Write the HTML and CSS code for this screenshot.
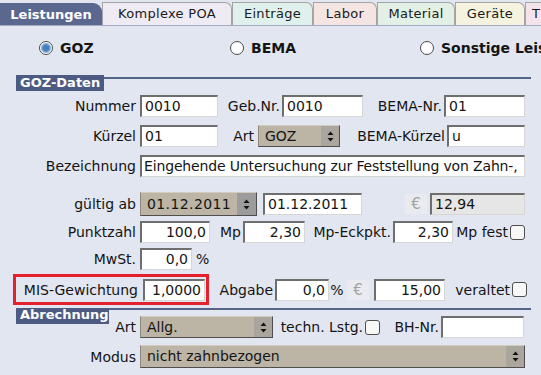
FILE: index.html
```html
<!DOCTYPE html>
<html lang="de">
<head>
<meta charset="utf-8">
<title>Leistungen</title>
<link rel="stylesheet" href="styles.css">
</head>
<body>
<div class="tabs">
  <div class="tab active w-leist">Leistungen</div>
  <div class="tab c-lav w-komp">Komplexe POA</div>
  <div class="tab c-mint w-eint">Einträge</div>
  <div class="tab c-pink w-labor">Labor</div>
  <div class="tab c-mint2 w-mat">Material</div>
  <div class="tab c-yel w-ger">Geräte</div>
  <div class="tab c-rose w-t">T</div>
</div>
<div class="content">
  <div class="radios">
    <div class="ritem w1"><span class="radio on"></span><span class="rlbl">GOZ</span></div>
    <div class="ritem w2"><span class="radio"></span><span class="rlbl">BEMA</span></div>
    <div class="ritem"><span class="radio"></span><span class="rlbl">Sonstige Leist</span></div>
  </div>

  <div class="ghead g1"><div class="gtitle">GOZ-Daten</div><div class="grule"></div></div>

  <div class="row r-num">
    <div class="lbl">Nummer</div>
    <div class="inp w78">0010</div>
    <div class="il w62">Geb.Nr.</div>
    <div class="inp w81">0010</div>
    <div class="il w79">BEMA-Nr.</div>
    <div class="inp w81">01</div>
  </div>

  <div class="row">
    <div class="lbl">Kürzel</div>
    <div class="inp w78">01</div>
    <div class="il w36 mr4">Art</div>
    <div class="sel w82"><span class="v">GOZ</span><span class="arr"><svg width="7" height="11" viewBox="0 0 7 11"><path d="M3.5 0.5 L6.5 4 L0.5 4 Z M3.5 10.5 L6.5 7 L0.5 7 Z" fill="#111"/></svg></span></div>
    <div class="il w105">BEMA-Kürzel</div>
    <div class="inp w78">u</div>
  </div>

  <div class="row">
    <div class="lbl">Bezeichnung</div>
    <div class="inp w385 tight">Eingehende Untersuchung zur Feststellung von Zahn-,</div>
  </div>

  <div class="row r-gueltig">
    <div class="lbl">gültig ab</div>
    <div class="sel spin w117"><span class="v">01.12.2011</span><span class="arr"><svg width="7" height="11" viewBox="0 0 7 11"><path d="M3.5 0.5 L6.5 4 L0.5 4 Z M3.5 10.5 L6.5 7 L0.5 7 Z" fill="#111"/></svg></span></div>
    <div class="inp w99 ml6">01.12.2011</div>
    <div class="euro ml43">€</div>
    <div class="inp dis w95 ml3">12,94</div>
  </div>

  <div class="row r-pz">
    <div class="lbl">Punktzahl</div>
    <div class="inp r w70">100,0</div>
    <div class="il w31">Mp</div>
    <div class="inp r w62">2,30</div>
    <div class="il w86">Mp-Eckpkt.</div>
    <div class="inp r w60">2,30</div>
    <div class="il w55">Mp fest</div>
    <div class="cb"></div>
  </div>

  <div class="row r-pz">
    <div class="lbl">MwSt.</div>
    <div class="inp r w52">0,0</div>
    <div class="pct ml4">%</div>
  </div>

  <div class="row r-mis">
    <div class="hl">
      <div class="lbl">MIS-Gewichtung</div>
      <div class="inp r w62">1,0000</div>
    </div>
    <div class="il w64">Abgabe</div>
    <div class="inp r w54">0,0</div>
    <div class="pct w16">%</div>
    <div class="euro ml2">€</div>
    <div class="inp r w71 ml5">15,00</div>
    <div class="il w65">veraltet</div>
    <div class="cb"></div>
  </div>

  <div class="ghead g2"><div class="gtitle">Abrechnung</div><div class="grule"></div></div>

  <div class="row r-art">
    <div class="lbl">Art</div>
    <div class="sel w133"><span class="v">Allg.</span><span class="arr"><svg width="7" height="11" viewBox="0 0 7 11"><path d="M3.5 0.5 L6.5 4 L0.5 4 Z M3.5 10.5 L6.5 7 L0.5 7 Z" fill="#111"/></svg></span></div>
    <div class="il w90">techn. Lstg.</div>
    <div class="cb"></div>
    <div class="il w59">BH-Nr.</div>
    <div class="inp w83"></div>
  </div>

  <div class="row r-modus">
    <div class="lbl">Modus</div>
    <div class="sel w385"><span class="v">nicht zahnbezogen</span><span class="arr"><svg width="7" height="11" viewBox="0 0 7 11"><path d="M3.5 0.5 L6.5 4 L0.5 4 Z M3.5 10.5 L6.5 7 L0.5 7 Z" fill="#111"/></svg></span></div>
  </div>
</div>
</body>
</html>
```
FILE: styles.css
```css
html, body {
  margin: 0;
  padding: 0;
  overflow: hidden;
}
body {
  width: 541px;
  height: 375px;
  background: #e2e6f0;
  font-family: "DejaVu Sans", "Liberation Sans", sans-serif;
  font-size: 14px;
  color: #141414;
}

/* tabs */
.tabs {
  display: flex;
  align-items: flex-end;
  height: 25px;
  border-bottom: 1px solid #a3abc2;
  white-space: nowrap;
  overflow: hidden;
}
.tab {
  flex: none;
  box-sizing: border-box;
  height: 23px;
  border: 1px solid #a4a4a4;
  border-bottom: none;
  border-top-right-radius: 7px;
  text-align: center;
  line-height: 21px;
  font-size: 13px;
  letter-spacing: 0.3px;
  color: #1a1a1a;
}
.tab.active {
  height: 22px;
  background: #5a6890;
  border-color: #5a6890;
  color: #fff;
  font-weight: bold;
  letter-spacing: 0;
  border-top-right-radius: 9px;
}
.w-leist { width: 102px; }
.w-komp { width: 130px; }
.w-eint { width: 81px; }
.w-labor { width: 64px; }
.w-mat { width: 78px; }
.w-ger { width: 70px; }
.w-t { width: 30px; text-align: left; padding-left: 6px; }
.c-lav { background: #efebf4; }
.c-mint { background: #e0f0ec; }
.c-pink { background: #f4e5e3; }
.c-mint2 { background: #e2f0e6; }
.c-yel { background: #f5f3df; }
.c-rose { background: #f4e3ea; }

/* content */
.content {
  padding-left: 16px;
  display: flex;
  flex-direction: column;
}
.radios {
  display: flex;
  align-items: center;
  height: 18px;
  margin-top: 13px;
  padding-left: 23px;
  white-space: nowrap;
}
.ritem { display: flex; align-items: center; flex: none; }
.w1 { width: 191px; }
.w2 { width: 190px; }
.radio {
  box-sizing: border-box;
  width: 14px;
  height: 14px;
  border-radius: 50%;
  border: 1px solid #4a4a4a;
  background: #fff;
}
.radio.on {
  background: radial-gradient(circle, #3c78b8 0, #4a86c4 3px, #8fb4dc 4.5px, #fff 5.5px);
}
.rlbl {
  margin-left: 7px;
  font-weight: bold;
  font-size: 14px;
}

/* group header */
.ghead {
  display: flex;
  align-items: flex-start;
  width: 515px;
  height: 16px;
}
.g1 { margin-top: 18px; }
.g2 { margin-top: 3px; }
.gtitle {
  background: #4d5b82;
  color: #fff;
  font-weight: bold;
  font-size: 13px;
  height: 16px;
  line-height: 15px;
  padding: 0 4px;
}
.g2 .gtitle { width: 85px; padding: 0 4px; line-height: 13px; }
.grule {
  flex: 1;
  height: 2px;
  background: #56648a;
  margin-top: 2px;
}
.g2 .grule { margin-top: 0; }

/* rows */
.row {
  display: flex;
  align-items: center;
  height: 22px;
  margin-top: 8px;
  white-space: nowrap;
}
.r-num { margin-top: 4px; }
.r-gueltig { margin-top: 15px; height: 24px; }
.r-pz { margin-top: 5px; }
.r-mis { margin-top: 4px; height: 31px; }
.r-art { margin-top: -8px; }
.r-modus { margin-top: 7px; height: 23px; }

.lbl {
  flex: none;
  width: 120px;
  margin-right: 4px;
  text-align: right;
}
.il {
  flex: none;
  text-align: right;
  margin-right: 2px;
}
.pct { flex: none; text-align: center; }

.inp {
  flex: none;
  box-sizing: border-box;
  height: 22px;
  background: #fff;
  border-style: solid;
  border-width: 2px 1px 1px 2px;
  border-color: #6e6e6e #d6d6d6 #d6d6d6 #6e6e6e;
  padding: 0 3px;
  line-height: 19px;
  overflow: hidden;
  white-space: nowrap;
}
.inp.r { text-align: right; }
.inp.dis { background: #e6e6e6; }
.inp.tight { letter-spacing: -0.15px; padding-left: 2px; }

.sel {
  flex: none;
  display: flex;
  box-sizing: border-box;
  height: 22px;
  background: #bcb5a6;
  border: 1px solid;
  border-color: #d2ccc0 #4e4e4e #4e4e4e #8e887c;
}
.r-gueltig .sel { height: 24px; }
.r-modus .sel { height: 23px; }
.sel .v {
  flex: 1;
  padding-left: 6px;
  line-height: 20px;
  overflow: hidden;
}
.r-gueltig .sel .v { line-height: 22px; letter-spacing: 0.4px; }
.sel .arr {
  width: 18px;
  background: #aaa69d;
  display: flex;
  align-items: center;
  justify-content: center;
}
.sel.spin .arr { background: #9c9c9c; width: 19px; }

.euro {
  flex: none;
  width: 22px;
  height: 20px;
  line-height: 20px;
  text-align: center;
  background: #e9ebf0;
  color: #a2a2a2;
  font-size: 15px;
}

.cb {
  flex: none;
  box-sizing: border-box;
  width: 15px;
  height: 15px;
  border: 1px solid #4f4f4f;
  border-radius: 3px;
  background: #f7f7f7;
}

.hl {
  flex: none;
  display: flex;
  align-items: center;
  margin-left: -3px;
  border: 3px solid #e3202c;
  padding: 2px 1px 1px 0;
}
.hl .lbl { width: 122px; margin-right: 5px; }

/* widths */
.w16 { width: 16px; }
.w31 { width: 31px; }
.w36 { width: 36px; }
.w52 { width: 52px; }
.w54 { width: 54px; }
.w55 { width: 55px; }
.w59 { width: 59px; }
.w60 { width: 60px; }
.w62 { width: 62px; }
.w64 { width: 64px; }
.w65 { width: 65px; }
.w70 { width: 70px; }
.w71 { width: 71px; }
.w78 { width: 78px; }
.w79 { width: 79px; }
.w81 { width: 81px; }
.w82 { width: 82px; }
.w83 { width: 83px; }
.w86 { width: 86px; }
.w90 { width: 90px; }
.w95 { width: 95px; }
.w99 { width: 99px; }
.w105 { width: 105px; }
.w117 { width: 117px; }
.w133 { width: 133px; }
.w385 { width: 385px; }

.ml2 { margin-left: 2px; }
.ml3 { margin-left: 3px; }
.ml4 { margin-left: 4px; }
.ml5 { margin-left: 5px; }
.ml6 { margin-left: 6px; }
.ml43 { margin-left: 43px; }
.mr4 { margin-right: 4px; }
```
